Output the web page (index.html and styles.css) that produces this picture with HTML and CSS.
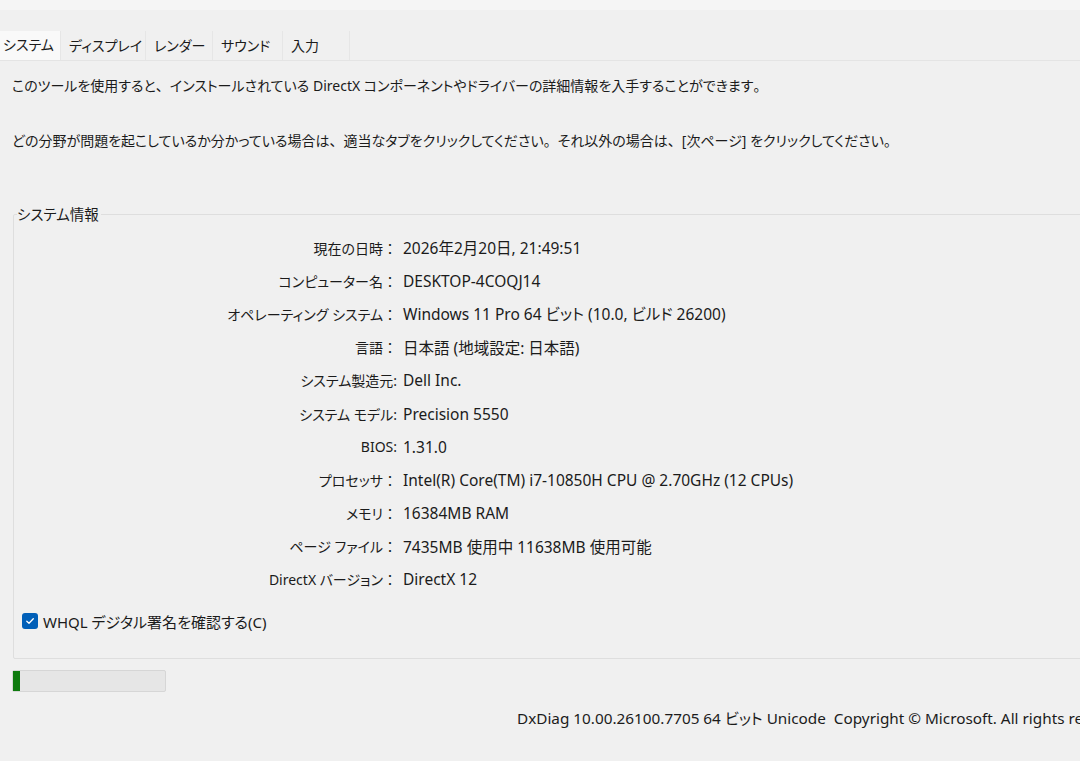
FILE: index.html
```html
<!DOCTYPE html>
<html lang="ja">
<head>
<meta charset="utf-8">
<title>DirectX 診断ツール</title>
<link rel="stylesheet" href="styles.css">
</head>
<body>
<div class="topband"></div>
<div class="tabs">
  <div class="tab tab-active t1">システム</div>
  <div class="tab t2">ディスプレイ</div>
  <div class="tab t3">レンダー</div>
  <div class="tab t4">サウンド</div>
  <div class="tab t5">入力</div>
</div>
<div class="panel">
  <p class="intro first">このツールを使用すると<span class="pn">、</span>インストールされている DirectX コンポーネントやドライバーの詳細情報を入手することができます<span class="pn">。</span></p>
  <p class="intro second">どの分野が問題を起こしているか分かっている場合は<span class="pn">、</span>適当なタブをクリックしてください<span class="pn">。</span>それ以外の場合は<span class="pn">、</span>[次ページ] をクリックしてください<span class="pn">。</span></p>
  <fieldset class="group">
    <legend>システム情報</legend>
    <div class="info">
      <div class="lbl">現在の日時<span class="pn">：</span></div><div class="val">2026年2月20日, 21:49:51</div>
      <div class="lbl">コンピューター名<span class="pn">：</span></div><div class="val">DESKTOP-4COQJ14</div>
      <div class="lbl">オペレーティング システム<span class="pn">：</span></div><div class="val">Windows 11 Pro 64 ビット (10.0, ビルド 26200)</div>
      <div class="lbl">言語<span class="pn">：</span></div><div class="val">日本語 (地域設定: 日本語)</div>
      <div class="lbl">システム製造元:</div><div class="val">Dell Inc.</div>
      <div class="lbl">システム モデル:</div><div class="val">Precision 5550</div>
      <div class="lbl">BIOS:</div><div class="val">1.31.0</div>
      <div class="lbl">プロセッサ<span class="pn">：</span></div><div class="val">Intel(R) Core(TM) i7-10850H CPU @ 2.70GHz (12 CPUs)</div>
      <div class="lbl">メモリ<span class="pn">：</span></div><div class="val">16384MB RAM</div>
      <div class="lbl">ページ ファイル<span class="pn">：</span></div><div class="val">7435MB 使用中 11638MB 使用可能</div>
      <div class="lbl">DirectX バージョン<span class="pn">：</span></div><div class="val">DirectX 12</div>
    </div>
    <label class="check">
      <span class="box"><svg width="10" height="10" viewBox="0 0 10 10"><path d="M1.8 5.2 L4 7.3 L8.3 2.8" fill="none" stroke="#ffffff" stroke-width="1.3" stroke-linecap="round" stroke-linejoin="round"/></svg></span>
      <span>WHQL デジタル署名を確認する(C)</span>
    </label>
  </fieldset>
  <div class="progress"><div class="fill" style="width:7px"></div></div>
  <div class="footer">DxDiag 10.00.26100.7705 64 ビット Unicode&nbsp; Copyright © Microsoft. All rights reserved.</div>
</div>
</body>
</html>
```

FILE: styles.css
```css
html, body {
  margin: 0;
  padding: 0;
}
body {
  width: 1080px;
  height: 761px;
  overflow: hidden;
  background: #f0f0f0;
  color: #1b1b1b;
  font-family: "Noto Sans", "Noto Sans CJK JP", sans-serif;
  font-size: 14px;
  font-feature-settings: "palt";
}
.pn {
  font-feature-settings: normal;
}
.topband {
  height: 10px;
  background: #f5f5f5;
}
.tabs {
  margin-top: 21px;
  height: 29px;
  display: flex;
  border-bottom: 1px solid #e4e4e4;
}
.tab {
  height: 29px;
  line-height: 29px;
  padding-left: 8px;
  box-sizing: border-box;
  border-right: 1px solid #e6e6e6;
  background: #f0f0f0;
  white-space: nowrap;
}
.tab-active {
  background: #f9f9f9;
  line-height: 27px;
  padding-left: 3px;
}
.t1 { width: 61px; }
.t2 { width: 85px; }
.t3 { width: 67px; }
.t4 { width: 70px; }
.t5 { width: 67px; }
.panel {
  padding-left: 12px;
}
.intro {
  margin: 0;
  line-height: 20px;
  white-space: nowrap;
}
.intro.first { padding-top: 15px; }
.intro.second { margin-top: 35px; }
.group {
  margin: 53px 0 0 1px;
  padding: 0 0 27px 0;
  width: 1100px;
  border: 1px solid #dedede;
  border-radius: 2px;
}
.group legend {
  margin-left: 3px;
  padding: 0 2px 0 0;
  line-height: 20px;
  font-size: 14.5px;
}
.info {
  margin-top: 7px;
  display: grid;
  grid-template-columns: 383px 1fr;
  column-gap: 6px;
  grid-auto-rows: 33.2px;
  align-items: center;
}
.lbl {
  text-align: right;
  white-space: nowrap;
}
.val {
  white-space: nowrap;
  font-size: 15.5px;
}
.check {
  margin-top: 15px;
  padding-left: 8px;
  display: flex;
  align-items: center;
  gap: 5px;
  height: 20px;
  font-size: 15px;
}
.box {
  width: 16px;
  height: 16px;
  border-radius: 3px;
  background: #005fb8;
  display: flex;
  align-items: center;
  justify-content: center;
}
.progress {
  margin-top: 11px;
  width: 154px;
  height: 22px;
  box-sizing: border-box;
  background: #e6e6e6;
  border: 1px solid #d6d6d6;
  border-radius: 2px;
  display: flex;
}
.fill {
  background: #0f7b0f;
  height: 100%;
}
.footer {
  margin-top: 16px;
  padding-left: 505px;
  line-height: 20px;
  white-space: nowrap;
  font-size: 15.3px;
}
```
